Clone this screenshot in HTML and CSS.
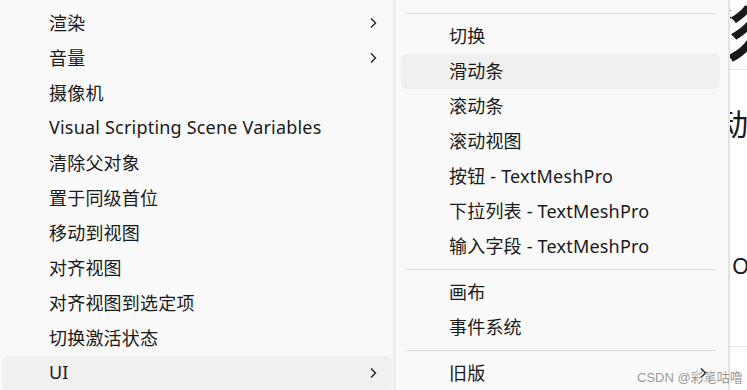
FILE: index.html
```html
<!DOCTYPE html>
<html lang="zh-CN">
<head>
  <meta charset="UTF-8" />
  <title>UI 菜单</title>
  <link rel="stylesheet" href="styles.css">
</head>
<body>
  <div class="pantalla">
    <ul class="menu menu-principal">
      <li class="item">渲染<svg class="flecha" viewBox="0 0 8 12"><path d="M2 1.5 L6.5 6 L2 10.5"/></svg></li>
      <li class="item">音量<svg class="flecha" viewBox="0 0 8 12"><path d="M2 1.5 L6.5 6 L2 10.5"/></svg></li>
      <li class="item">摄像机</li>
      <li class="item">Visual Scripting Scene Variables</li>
      <li class="item">清除父对象</li>
      <li class="item">置于同级首位</li>
      <li class="item">移动到视图</li>
      <li class="item">对齐视图</li>
      <li class="item">对齐视图到选定项</li>
      <li class="item">切换激活状态</li>
      <li class="item activo">UI<svg class="flecha" viewBox="0 0 8 12"><path d="M2 1.5 L6.5 6 L2 10.5"/></svg></li>
    </ul>

    <ul class="menu submenu">
      <li class="separador"></li>
      <li class="item">切换</li>
      <li class="item activo">滑动条</li>
      <li class="item">滚动条</li>
      <li class="item">滚动视图</li>
      <li class="item">按钮 - TextMeshPro</li>
      <li class="item">下拉列表 - TextMeshPro</li>
      <li class="item">输入字段 - TextMeshPro</li>
      <li class="separador"></li>
      <li class="item">画布</li>
      <li class="item">事件系统</li>
      <li class="separador"></li>
      <li class="item">旧版<svg class="flecha" viewBox="0 0 8 12"><path d="M2 1.5 L6.5 6 L2 10.5"/></svg></li>
    </ul>

    <div class="fondo">
      <div class="fondo-titulo"><span>彩</span></div>
      <div class="fondo-texto">动</div>
      <div class="fondo-letra">O</div>
      <div class="fondo-linea"></div>
    </div>

    <div class="marca">CSDN @彩笔咕噜</div>
  </div>
</body>
</html>
```

FILE: styles.css
```css
body {
  margin: 0;
  background-color: #fff;
  font-family: 'Noto Sans', 'Noto Sans CJK SC', sans-serif;
  color: #1a1a1a;
}

.pantalla {
  position: relative;
  display: flex;
  width: 747px;
  height: 390px;
  overflow: hidden;
}

.menu {
  list-style: none;
  margin: 0;
  background-color: #f9f9f9;
}

.menu-principal {
  width: 390px;
  padding: 6px 1px 0 2px;
  border-right: 3px solid #ececec;
  flex-shrink: 0;
}

.submenu {
  width: 319px;
  padding: 8px 8px 0 5px;
  border-right: 2px solid #e3e3e3;
  flex-shrink: 0;
}

.item {
  position: relative;
  height: 35px;
  box-sizing: border-box;
  padding-bottom: 4px;
  display: flex;
  align-items: center;
  font-size: 18px;
  letter-spacing: 0.2px;
  border-radius: 5px;
  white-space: nowrap;
}

.menu-principal .item {
  padding-left: 47px;
}

.submenu .item {
  padding-left: 48px;
}

.item.activo {
  background-color: #f0f0f0;
}

.flecha {
  position: absolute;
  top: 11px;
  width: 8px;
  height: 12px;
  fill: none;
  stroke: #222;
  stroke-width: 1.4;
}

.menu-principal .flecha {
  right: 15px;
}

.submenu .flecha {
  right: 13px;
}

.separador {
  height: 11px;
  display: flex;
  align-items: center;
  padding: 0 4px 0 5px;
}

.separador::before {
  content: '';
  flex: 1;
  border-top: 1px solid #dcdcdc;
}

.fondo {
  flex: 1;
  overflow: hidden;
  background-color: #fff;
}

.fondo-titulo {
  height: 69px;
  border-bottom: 1px solid #e6e6e6;
  font-size: 60px;
  font-weight: bold;
  line-height: 66px;
  color: #1a1a1a;
}

.fondo-titulo span {
  display: inline-block;
  margin-left: -34px;
}

.fondo-texto {
  margin: 34px 0 0 -12px;
  font-size: 30px;
  line-height: 40px;
}

.fondo-letra {
  margin: 106px 0 0 2px;
  font-size: 22px;
  line-height: 30px;
}

.fondo-linea {
  margin-top: 66px;
  border-top: 1px solid #e6e6e6;
}

.marca {
  position: absolute;
  left: 637px;
  top: 367px;
  font-size: 13px;
  white-space: nowrap;
  color: rgba(120, 120, 120, 0.75);
  font-family: 'Liberation Sans', 'Noto Sans CJK SC', sans-serif;
}
```
